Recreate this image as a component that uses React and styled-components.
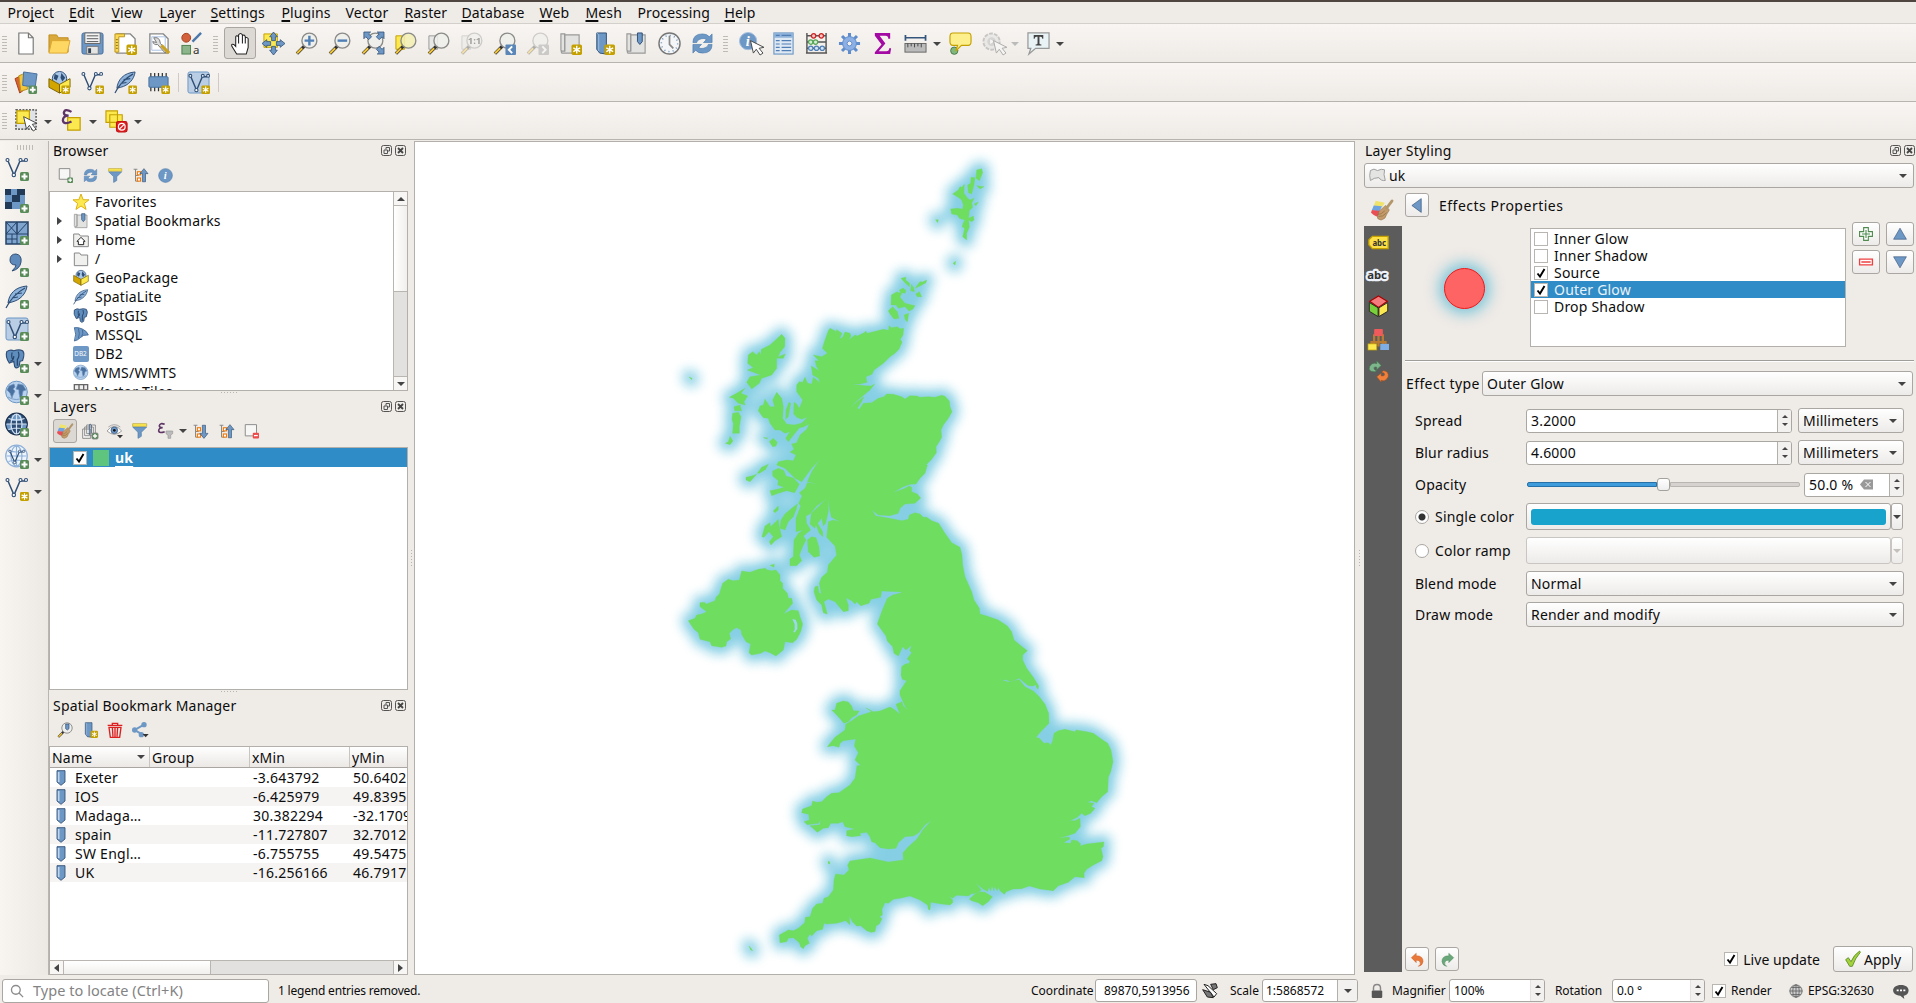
import React from "react";
import styled, { createGlobalStyle, css } from "styled-components";

const Global = createGlobalStyle`
  * { box-sizing: border-box; }
  html, body { margin: 0; padding: 0; }
  body {
    width: 1916px; height: 1003px; overflow: hidden; background: #efebe7; color: #0c0c0c;
    font-family: "Noto Sans", "Open Sans", sans-serif; font-size: 14px; line-height: 19px; letter-spacing: .2px;
  }
`;

/* ---------- icons ---------- */

const B = "#6d97c4";
const D = "#2f4e75";

const Star = ({ x = 15, y = 15, s = 9 }) => (
  <g transform={`translate(${x} ${y}) scale(${s / 9})`}>
    <rect width="9" height="9" rx="1.4" fill="#c4a000" />
    <path d="M4.5 1.2v6.6M1.6 2.9l5.8 3.2M7.4 2.9L1.6 6.1" stroke="#fff" strokeWidth="1.2" />
  </g>
);
const Plus = ({ x = 15, y = 15, s = 9 }) => (
  <g transform={`translate(${x} ${y}) scale(${s / 9})`}>
    <rect width="9" height="9" rx="1.6" fill="#5a8c5a" />
    <path d="M4.5 1.5v6M1.5 4.5h6" stroke="#fff" strokeWidth="2" />
  </g>
);
const Lens = ({ children, sheet }) => (
  <g>
    {sheet && <path d="M2 4h9v14H2z" fill={sheet} stroke={sheet === "#fce94f" ? "#c4a000" : "#999"} />}
    <path d="M10 14.5L2 22.5" stroke="#333" strokeWidth="3.4" />
    <path d="M7.5 17L2.2 22.2" stroke="#f4c534" strokeWidth="2" />
    <circle cx="15" cy="9" r="7.8" fill={sheet === "#fce94f" ? "#f3efb4" : "#eeeeec"} fillOpacity=".88" stroke="#8a8a88" strokeWidth="1.4" />
    {children}
  </g>
);
const VLine = ({ c = D }) => (
  <g fill="#fff" stroke={c} strokeWidth="1.1">
    <path d="M3 4l6 14L15 4h5" fill="none" strokeWidth="1.5" />
    <circle cx="2.500" cy="3" r="1.500" /><circle cx="8.800" cy="18" r="1.700" />
    <circle cx="15.500" cy="3" r="1.500" /><circle cx="21" cy="3" r="1.500" />
  </g>
);
const Feather = () => (
  <g>
    <path d="M22 1C10 2 4 9 3 18l4-1c8-2 14-8 15-16z" fill="#8fb4dc" stroke={D} />
    <path d="M1 23C5 15 11 8 20 3M7 13l6-1M10 9l7-1" stroke={D} fill="none" strokeWidth="1.200" />
  </g>
);
const Globe = ({ dark, c = D, f = "#a9c6e6" }) => (
  <g fill="none" stroke={dark ? "#d5e3f2" : c} strokeWidth="1.2">
    <circle cx="11.5" cy="11" r="10.8" fill={dark ? D : f} stroke={dark ? "#1d3350" : c} />
    {dark && <path d="M7 2h9l1 6H6zM1 11h5l1 6H3zM17 11h5l-2 6h-4z" fill={B} stroke="none" />}
    <path d="M11.5 1v20M1.5 11h20M3.5 5.5q8 3 16 0M3.5 16.5q8-3 16 0" />
    <ellipse cx="11.5" cy="11" rx="5.5" ry="10" />
  </g>
);
const Continents = () => (
  <g>
    <circle cx="11.5" cy="11" r="10.8" fill="#b9d2ee" stroke={B} />
    <path d="M4 5l5-2 1 3-2 2 2 2-2 4-1 3-2-5-3-3zM13 3l5 1 3 5-3 1-1 5-2 2-1-5v-3l-3-1z" fill="#4a719f" stroke="#6d93bf" strokeWidth=".7" />
    <path d="M3 16q8 5 17 0" fill="none" stroke="#7ca0c9" />
  </g>
);
const Elephant = () => (
  <g>
    <path d="M2 3q4-3 8-1 6-2 10 0 3 3 0 11l-3 1-1 6q-3 3-5 0l-1-6-5 2Q0 9 2 3z" fill="#5f8dbd" stroke={D} strokeWidth="1.300" />
    <path d="M8 4q-1 6 1 8M15 3q2 5-1 9v7M6 14q4-1 4-6" fill="none" stroke="#264166" strokeWidth="1.300" />
  </g>
);
const RefreshArrows = () => (
  <g fill={B} stroke="#3f72a8" strokeWidth=".6">
    <path d="M2 11Q2 2 12 2q5 0 7 3l3-3v9h-9l3-3q-2-2-5-1-5 1-5 4z" />
    <path d="M22 13q0 9-10 9-5 0-7-3l-3 3v-9h9l-3 3q2 2 5 1 5-1 5-4z" />
  </g>
);
const Tree = ({ up }) => (
  <g>
    <path d="M1 2h6M4 2v19h5M4 12h5" stroke="#888" strokeWidth="1.600" fill="none" />
    <rect x="7" y="6" width="5" height="5" fill="#fff" stroke="#f57900" strokeWidth="1.800" />
    <rect x="7" y="16" width="5" height="5" fill="#fff" stroke="#f57900" strokeWidth="1.800" />
    <path d={up ? "M15 22V9h-4l6.500-8 6.500 8h-4v13z" : "M15 2v13h-4l6.500 8 6.500-8h-4V2z"} fill={B} stroke={D} />
  </g>
);
const Cursor = ({ x = 0, y = 0, f = "#fff", s = "#444" }) => (
  <path transform={`translate(${x} ${y})`} d="M9 8l3 13 3-4 4 6 3-2-4-5 5-1z" fill={f} stroke={s} strokeWidth="1" />
);
const Book = () => (
  <g>
    <path d="M2 2h4v18H3l-1-1zM6 3h15v19H3l-1-2" fill="#e2e2e0" stroke="#999" strokeWidth="1.200" />
    <path d="M6 2v18" stroke="#999" />
  </g>
);
const Funnel = () => (
  <g><path d="M1 6l8 8v9l5-3v-6l8-8z" fill={B} stroke="#4d7bac" /><path d="M1 1h21v4H1z" fill="#fce94f" stroke="#b8a235" /></g>
);
const Sheet = ({ c = "#888" }) => <path d="M3 2h14l5 5v15H3z" fill="#fff" stroke={c} strokeWidth="1.400" />;

const ICONS = {
  page: <path d="M4 1h10l5 5v17H4zM14 1v5h5" fill="#fff" stroke="#777" strokeWidth="1.200" />,
  open: <g><path d="M1 3h8l2 3h10v15H1z" fill="#d9a93b" stroke="#c08d1d" /><path d="M4 9h19l-3 13H1z" fill="#ffd763" stroke="#dba82d" /></g>,
  save: <g><rect x="1" y="1" width="22" height="22" rx="2" fill={B} stroke="#456f9e" /><path d="M4 1h16v11H4z" fill="#f4f4f4" stroke="#666" /><path d="M6 4h12M6 7h12M6 10h12" stroke="#555" strokeWidth="1" /><path d="M6 15h12v8H6z" fill="#e4e4e2" stroke="#777" /><path d="M7.500 17h3v5h-3z" fill="#345" /></g>,
  layout: <g><Sheet /><path d="M1 2h10v3H5v16H1z" fill="#fcd94f" stroke="#b8931d" /><path d="M2 8h2M2 11h2M2 14h2M2 17h2" stroke="#8b6d00" /><Star x={13} y={13} s={11} /></g>,
  tools: <g><Sheet /><path d="M5 5h14v14H5z" fill="none" stroke="#a9c0e4" /><path d="M7 6q4-1 6 2l1 4 7 7-2 3-8-9q-4 1-5-3l4 1z" fill="#ddd" stroke="#777" /><path d="M15 14l8 8" stroke="#c8a227" strokeWidth="3.500" /></g>,
  style: <g><circle cx="6.500" cy="6" r="4.600" fill="#d2603a" stroke="#a3401f" /><path d="M22 1l-9 9" stroke="#4a78ab" strokeWidth="2.500" /><rect x="2" y="14" width="9" height="9" fill="#8cb58c" stroke="#4c7f4c" /><text x="13.500" y="23" fontSize="12" fill="#333">a</text></g>,
  hand: <path d="M8 23l-5-8q-1-3 2-2l2 2V5q1-2 3 0V3q2-3 4 0v1q2-2 3 1v1q2-1 3 1v9l-2 7zM10 5v7M14 4v8M17 6v6" fill="#fff" stroke="#222" strokeWidth="1.100" />,
  pan: <g><path d="M2 2h14v14H2z" fill="#fce94f" stroke="#c4a000" /><path d="M12 0l4 5h-2v4h-4V5H8zM12 24l4-5h-2v-4h-4v4H8zM0 12l5-4v2h4v4H5v2zM24 12l-5-4v2h-4v4h4v2z" fill={B} stroke={D} strokeWidth=".8" /></g>,
  zoomin: <Lens><path d="M15 4v10M10 9h10" stroke="#4f7fb5" strokeWidth="2.500" /></Lens>,
  zoomout: <Lens><path d="M10 9h10" stroke="#4f7fb5" strokeWidth="2.500" /></Lens>,
  zoomfull: <g><Lens /><path d="M3 0h7L8 2l3 3-3 3-3-3-2 2zM24 0v7l-2-2-3 3-3-3 3-3-2-2zM24 23v-7l-2 2-3-3-3 3 3 3-2 2z" fill={B} stroke={D} strokeWidth=".8" /></g>,
  zoomsel: <Lens sheet="#fce94f" />,
  zoomlayer: <Lens sheet="#e8e8e6" />,
  zoom11: <g opacity=".35"><Lens sheet="#e8e8e6"><text x="8" y="13" fontSize="10" fontWeight="700" letterSpacing="0">1:1</text></Lens></g>,
  zoomprev: <g><Lens /><rect x="13" y="13" width="11" height="11" rx="1" fill="#5b87b8" /><path d="M20 15l-3.500 3.500L20 22" stroke="#fff" strokeWidth="2" fill="none" /></g>,
  zoomnext: <g opacity=".35"><Lens /><rect x="13" y="13" width="11" height="11" rx="1" fill="#888" /><path d="M17 15l3.500 3.500L17 22" stroke="#fff" strokeWidth="2" fill="none" /></g>,
  newbook: <g><Book /><Star x={13} y={13} s={11} /></g>,
  newmark: <g><path d="M5 1h10v22l-7-1-3-4z" fill={B} stroke={D} /><path d="M5 1l2 2v17" fill="none" stroke="#9cbde2" /><Star x={13} y={13} s={11} /></g>,
  book: <g><Book /><path d="M13 1h5v9l-2.500 3L13 10z" fill={B} stroke={D} /></g>,
  clock: <g><circle cx="12" cy="12" r="11" fill="#f4f6f8" stroke="#777" strokeWidth="1.500" /><circle cx="12" cy="12" r="8.500" fill="none" stroke="#5f86b0" strokeWidth="1.500" strokeDasharray="1 3.450" /><path d="M12 4v9l4 4" stroke="#888" strokeWidth="1.800" fill="none" /></g>,
  refresh: <RefreshArrows />,
  identify: <g><circle cx="9.500" cy="9.500" r="9" fill={B} stroke="#a4bfe0" /><text x="7" y="15" fontSize="15" fontWeight="700" fontStyle="italic" fontFamily="Liberation Serif" fill="#fff">i</text><Cursor x={3} y={1} /></g>,
  table: <g><rect x="2" y="1" width="20" height="22" fill="#dfe9f4" stroke={B} strokeWidth="1.200" /><path d="M2 1h20v5H2z" fill="#8fb2da" /><path d="M4 3.500h4M10 3.500h10M4 9h4M10 9h10M4 12.500h4M10 12.500h10M4 16h4M10 16h10M4 19.500h4M10 19.500h10" stroke="#4f7fb5" strokeWidth="1.200" /></g>,
  abacus: <g><path d="M2 1v20M22 1v20M2 4h20M2 10.500h20M2 17h20M1 22h22" stroke="#555" strokeWidth="1.500" /><g strokeWidth="1.300"><g fill="#f7c5c5" stroke="#cc2222"><circle cx="9" cy="4" r="2.300" /><circle cx="17" cy="4" r="2.300" /></g><g fill="#d5efd5" stroke="#58a558"><circle cx="6" cy="10.500" r="2.300" /><circle cx="11" cy="10.500" r="2.300" /></g><g fill="#d5e5f5" stroke="#4f7fb5"><circle cx="6" cy="17" r="2.300" /><circle cx="12" cy="17" r="2.300" /><circle cx="18" cy="17" r="2.300" /></g></g></g>,
  gear: <g><g stroke="#5f8dcc" strokeWidth="3.200"><path d="M12 1v22M1 12h22M4.200 4.200l15.600 15.600M19.800 4.200L4.200 19.800" /></g><circle cx="12" cy="12" r="7.200" fill="#8cb0e4" stroke="#5f8dcc" /><circle cx="12" cy="12" r="2.500" fill="#f4f1ee" stroke="#5f8dcc" /></g>,
  sigma: <path d="M4 1h16v6h-2q0-3-3-3H9l6 8-7 8h8q3 0 3-3h2l-1 6H4v-2l7-8-7-9z" fill="#a30aa3" />,
  ruler: <g><path d="M1 6h22M1.500 3v6M22.500 3v6" stroke="#34557c" strokeWidth="1.800" /><rect x="1" y="12" width="22" height="9" fill="#bbb" stroke="#666" /><path d="M4 12v4M7.500 12v3M11 12v4M14.500 12v3M18 12v4" stroke="#444" /></g>,
  tip: <g><circle cx="5.500" cy="19.500" r="3.800" fill="#7fb87f" stroke="#4a7a4a" /><path d="M4 1h16q3 0 3 4v5q0 4-3 4h-7l-6 6 2-6H4q-3 0-3-4V5q0-4 3-4z" fill="#fdf08c" stroke="#c4a000" strokeWidth="1.200" /></g>,
  action: <g opacity=".4"><circle cx="10" cy="10" r="8.500" fill="#ddd" stroke="#888" strokeWidth="2" strokeDasharray="4 1.300" /><circle cx="10" cy="10" r="4.500" fill="#aaa" /><path d="M8.500 7.500l4 2.500-4 2.500z" fill="#fff" /><Cursor x={3} y={1} /></g>,
  textnote: <g><path d="M1 1h22v16H9l-7 6 2-6H1z" fill="#e9f2f5" stroke="#999" strokeWidth="1.300" /><path d="M7 3h10v4h-1q0-2-2-2h-1v7q0 1 2 1v1H9v-1q2 0 2-1V5h-1Q8 5 8 7H7z" fill="#444" /></g>,
  datasource: <g><path d="M0 8l6-3 3 15-4 3z" fill="#d9602f" stroke="#a3401f" /><path d="M4 5l7-3 2 17-7 2z" fill="#f3c73c" stroke="#b8931d" /><path d="M9 1l14 2-2 14-13-2z" fill={B} stroke="#456f9e" /><Plus x={14} y={15} /></g>,
  geopackage: <g><circle cx="12" cy="8" r="7.500" fill="#a9c6e6" stroke={D} /><path d="M7 3l4 2-2 5-3-2zM14 2l4 5-3 4-2-4z" fill={D} /><path d="M1 8l11 6v9L1 17z" fill="#d3a500" stroke="#7a6100" /><path d="M12 14l11-6v9l-11 6z" fill="#fce94f" stroke="#7a6100" /></g>,
  geopackagenew: <g><circle cx="12" cy="8" r="7.500" fill="#a9c6e6" stroke={D} /><path d="M7 3l4 2-2 5-3-2zM14 2l4 5-3 4-2-4z" fill={D} /><path d="M1 8l11 6v9L1 17z" fill="#d3a500" stroke="#7a6100" /><path d="M12 14l11-6v9l-11 6z" fill="#fce94f" stroke="#7a6100" /><Star x={14} y={15} /></g>,
  vnew: <g><VLine /><Star /></g>,
  vadd: <g><VLine /><Plus /></g>,
  feather: <Feather />,
  feathernew: <g><Feather /><Star /></g>,
  featheradd: <g><Feather /><Plus /></g>,
  chip: <g><path d="M4 2v19M8 2v19M12 2v19M16 2v19M20 2v19" stroke="#333" strokeWidth="1.300" /><rect x="2" y="6" width="20" height="11" rx="1" fill={B} stroke="#456f9e" /><Star /></g>,
  virtnew: <g><rect x="1" y="1" width="22" height="22" rx="2" fill="#b9cde4" stroke={B} /><g transform="translate(1 2)"><VLine /></g><Star /></g>,
  virtadd: <g><rect x="1" y="1" width="22" height="22" rx="2" fill="#b9cde4" stroke={B} /><g transform="translate(1 2)"><VLine /></g><Plus /></g>,
  select: <g><path d="M1 1h21v20H1z" fill="#dfe2e6" stroke="#333" strokeWidth="1.300" strokeDasharray="2 1.400" /><path d="M2 2h13v13H2z" fill="#fce94f" stroke="#c4a000" strokeWidth="1.300" /><Cursor /></g>,
  selexp: <g><path d="M8 9h13v13H8z" fill="#fce94f" stroke="#c4a000" strokeWidth="1.300" /><path d="M12 3Q5-1 4 4q0 3 5 3-6 0-6 5 1 5 9 1" fill="none" stroke="#5e3566" strokeWidth="2.400" /></g>,
  deselect: <g fill="#fce94f" stroke="#c4a000" strokeWidth="1.200"><path d="M1 2h12v12H1zM5 6h13v13H5z" /><rect x="12" y="13" width="11" height="11" rx="2" fill="#e02020" stroke="#c01010" /><circle cx="17.500" cy="18.500" r="3.500" fill="none" stroke="#fff" /><path d="M15 21l5-5" stroke="#fff" /></g>,
  raster: <g><rect width="20" height="20" fill={B} /><path d="M0 0h6v6H0zM12 0h8v6h-5v7h-8V6h5zM0 13h7v7H0z" fill="#213a58" /><Plus /></g>,
  mesh: <g><path d="M1 1h22v22H1z" fill="#7fa5cf" stroke="#264166" strokeWidth="1.500" /><path d="M1 13h22M12 1v22M1 1l11 12L12 1 1 13M12 13L23 1M7 13v10M1 18h11" fill="none" stroke="#264166" /><Plus /></g>,
  comma: <g><path d="M5 7q0-6 6-6 6 1 5 8-1 7-9 9 4-4 4-6-6 0-6-5z" fill="#5d8abb" stroke={D} /><Plus /></g>,
  pgadd: <g><g transform="scale(.88)"><Elephant /></g><Plus /></g>,
  wmsadd: <g><Continents /><Plus /></g>,
  wcsadd: <g><Globe dark /><Plus /></g>,
  wfsadd: <g><Globe c="#8db0d8" f="#eef4fb" /><g transform="translate(3 4) scale(.75)"><VLine /></g><Plus /></g>,
  addsel: <g><path d="M2 1h17v17H2z" fill="#f7f7f5" stroke="#888" strokeWidth="1.500" /><Plus /></g>,
  remsel: <g><path d="M2 1h18v18H2z" fill="#f7f7f5" stroke="#888" strokeWidth="1.500" /><rect x="14" y="14" width="10" height="9" rx="1.500" fill="#ef4b4b" /><path d="M16 18.500h6" stroke="#fff" strokeWidth="2" /></g>,
  filter: <Funnel />,
  treeup: <Tree up />,
  treedown: <Tree />,
  info: <g><circle cx="12" cy="12" r="11" fill={B} stroke="#4d7bac" /><text x="9" y="18" fontSize="17" fontWeight="700" fontStyle="italic" fontFamily="Liberation Serif" fill="#fff">i</text></g>,
  star: <path d="M12 0l3.200 8.500 8.800.2-7 5.500 2.600 9L12 18l-7.600 5.200 2.600-9-7-5.500 8.800-.2z" fill="#fce94f" stroke="#d8a800" strokeWidth="1.300" />,
  home: <g><path d="M1 3h8l2 3h12v16H1z" fill="#f0f0ee" stroke="#888" strokeWidth="1.500" /><path d="M6 14l6-6 6 6h-2v5H8v-5z" fill="#fff" stroke="#222" strokeWidth="1.500" /></g>,
  folder: <path d="M2 3h8l2 3h10v16H2z" fill="#f0f0ee" stroke="#888" strokeWidth="1.500" />,
  elephant: <Elephant />,
  mssql: <path d="M2 1q6-1 12 2 7 3 9 9-8-1-12 4-4 4-9 5 4-10 0-20zM8 2q3 9 0 15M14 4q2 6-1 10" fill="#6d97c4" stroke="#3f6797" strokeWidth="1.300" />,
  db2: <g><rect width="24" height="24" rx="3" fill={B} /><text x="2" y="15" fontSize="9.500" letterSpacing="0" fill="#fff">DB2</text></g>,
  wms: <Continents />,
  vtiles: <g><path d="M2 1h20v22H2z" fill="#eee" stroke="#666" strokeWidth="2" /><path d="M9 1v22M16 1v22M2 9h20" stroke="#666" strokeWidth="2" /></g>,
  brush: (
    <g>
      <path d="M5 2l10 2-3 5-9-1z" fill="#f0e36a" /><path d="M3 7l9 1-3 6-8-2z" fill="#6ea3e0" /><path d="M1 12l9 1 2 7q-7 0-12-5z" fill="#ea4e55" />
      <path d="M9 13l7-6 4 5-3 5q-1 5-6 6-5-1-4-4z" fill="#c39a6b" stroke="#8f6f45" strokeWidth=".6" />
      <path d="M8 19q5 1 9-4M7 17q4 0 8-4" fill="none" stroke="#94713f" strokeWidth=".8" />
      <path d="M17 10l6-8" stroke="#b3976b" strokeWidth="3" strokeLinecap="round" />
    </g>
  ),
  addgroup: <g fill="#f4f4f2" stroke="#888" strokeWidth="1.400"><path d="M1 9h12v14H1zM4 6h13v13H4zM7 3h13v13H7z" /><path d="M11 18V3q1-3 3 0v12" fill="none" stroke="#4a6484" /><Plus /></g>,
  eye: <g><path d="M0 12q11-14 22 0-11 10-22 0z" fill="#fff" stroke="#999" strokeWidth="1.400" /><circle cx="11" cy="11" r="5" fill={B} stroke={D} /><circle cx="11" cy="11" r="2" fill="#111" /><path d="M2 6q9-7 18 0" fill="none" stroke="#aaa" strokeWidth="1.500" /><path d="M15 18h9l-4.500 5z" fill="#333" /></g>,
  eps: <g><path d="M10 2Q3-1 2 4q0 3 5 3-6 0-6 5 1 4 9 1" fill="none" stroke="#5e3566" strokeWidth="2.400" /><path d="M12 12h10v4l-3 2v5h-4v-5l-3-2z" fill="#bbb" stroke="#999" /></g>,
  marklens: <g><Lens><path d="M13 3h5v7l-2.500 2L13 10z" fill={B} stroke={D} /></Lens></g>,
  trash: <g fill="none" stroke="#dd1f1f" strokeWidth="2"><path d="M3 8l2 15h14l2-15zM8 8l1 14M12 8v14M16 8l-1 14M1 5h22M8 5V2h8v3" /></g>,
  share: <g><path d="M18 4L4 12l12 7" fill="none" stroke={B} strokeWidth="3" /><circle cx="18" cy="4" r="4" fill={B} /><circle cx="4" cy="12" r="4" fill={B} /><circle cx="14" cy="19" r="4" fill={B} /><path d="M16 18h9l-4.500 5z" fill="#333" /></g>,
  mark: <g><path d="M6 1h12v17l-6 5-6-5z" fill={B} stroke={D} strokeWidth="1.300" /><path d="M8.500 3v15" stroke="#c0d6ee" strokeWidth="2.500" /></g>,
  poly: <path d="M2 5q5-4 10 0 6-3 10-1-2 6 1 15-6 1-9-4-7 0-12 4Q0 12 2 5z" fill="#e4e4e2" stroke="#999" strokeWidth="1.300" />,
  left: <path d="M18 1v22L3 12z" fill={B} stroke={D} />,
  up: <path d="M12 2l11 19H1z" fill={B} stroke={D} />,
  down: <path d="M12 22L1 3h22z" fill={B} stroke={D} />,
  add: <path d="M8 1h8v7h7v8h-7v7H8v-7H1V8h7zM12 5v14M5 12h14" fill="#fff" stroke="#4f8a4f" strokeWidth="1.900" />,
  remove: <path d="M1 7h22v10H1zM4 12h16" fill="#fff" stroke="#ef4040" strokeWidth="2.300" />,
  undo: <path d="M2 9l8-7v4q11 0 11 9-1 7-8 8 5-3 3-7-1-3-6-3v4z" fill="#e8793a" stroke="#c4571b" strokeWidth=".6" />,
  redo: <path d="M22 9l-8-7v4Q3 6 3 15q1 7 8 8-5-3-3-7 1-3 6-3v4z" fill="#6aa77a" stroke="#468556" strokeWidth=".6" />,
  check: <path d="M1 13l4-3 4 6Q13 6 22 0l1 2Q15 11 11 23H7z" fill="#a5d23c" stroke="#4c8415" strokeWidth="1.200" />,
  tag: <g><path d="M5 5h18v14H5l-4-4.500V9z" fill="#fce046" stroke="#c4a000" strokeWidth="1.500" /><text x="5" y="15.500" fontSize="9" fontWeight="700" letterSpacing="0" fill="#333">abc</text></g>,
  halo: <text x="-1" y="17" fontSize="13" fontWeight="700" letterSpacing="0" fill="#333" stroke="#eef2fb" strokeWidth="5" strokeLinejoin="round" paintOrder="stroke">abc</text>,
  cube: <g stroke="#222" strokeWidth="1"><path d="M12 0l10 6-10 7L2 6z" fill="#f47c7c" stroke="#a00" strokeWidth="1.300" /><path d="M1.500 7.500l10 6v10l-10-6z" fill="#7ad03a" /><path d="M22.500 7.500l-10 6v10l10-6z" fill="#fce94f" /></g>,
  diagram: <g><path d="M7 6v11M12 8v12M17 6v11M4 18v-3h16v3" stroke="#b97a32" strokeWidth="2.600" fill="none" /><rect x="7" y="0" width="10" height="8" rx="1" fill="#ef5a5a" /><rect x="0" y="17" width="10" height="7" fill="#fce94f" stroke="#c4a000" strokeWidth=".8" /><rect x="14" y="17" width="10" height="7" fill="#7fade6" /></g>,
  history: (
    <g strokeWidth=".6">
      <path d="M6 12Q0 12 2 6q3-5 8-3V0l5 5-5 5V7Q6 6 7 9q1 2 3 2-2 2-4 1z" fill="#7fb58c" stroke="#3c7a4a" />
      <path d="M18 11q6 1 5 7-3 6-8 4v2l-5-6 5-4v3q4 1 4-2 0-2-3-2 0-2 2-2z" fill="#f0803c" stroke="#b3521a" />
    </g>
  ),
  search: <g fill="none" stroke="#8c8c8c" strokeWidth="2.300"><circle cx="10" cy="10" r="7.500" /><path d="M15.500 15.500l7 7" /></g>,
  extents: <g fill="#fff" stroke="#222" strokeWidth="1.500"><path d="M3 2l15 19 4-5L9 4z" /><path d="M1 10l7 11 9 1-4-8zM13 2l8-1 2 6-6 3z" fill="#777" /></g>,
  lock: <g><path d="M6 11V7q0-6 6-6t6 6v4" fill="none" stroke="#888" strokeWidth="2.500" /><rect x="3" y="11" width="18" height="13" rx="2" fill="#555" /></g>,
  crs: <g fill="none" stroke="#666" strokeWidth="1.500"><circle cx="12" cy="12" r="10.500" fill="#ccc" /><path d="M12 1v22M1 12h22M4 6h16M4 18h16" /><ellipse cx="12" cy="12" rx="5.500" ry="10.500" /></g>,
  bubble: <g><path d="M12 3c15 0 14 15 4 16l1 5-6-5C-4 18-3 3 12 3z" fill="#555" /><path d="M5.500 11h3M10.500 11h3M15.500 11h3" stroke="#fff" strokeWidth="2.600" /></g>,
};

const Svg = styled.svg`
  display: block; flex: none; overflow: visible;
  width: ${(p) => p.$s}px; height: ${(p) => p.$s}px;
`;
const Icon = ({ n, s = 22 }) => <Svg $s={s} viewBox="0 0 24 24">{ICONS[n]}</Svg>;

const Caret = styled.i`
  display: block; flex: none; width: 0; height: 0; margin: 0 auto;
  border: ${(p) => p.$s || 4}px solid transparent;
  ${(p) => (p.$up ? "border-top-width: 0; border-bottom-color:" : "border-bottom-width: 0; border-top-color:")}
  ${(p) => p.$c || "#444"};
`;
const CaretSide = styled.i`
  width: 0; height: 0; border: 4.500px solid transparent;
  ${(p) => (p.$left ? "border-left-width: 0; border-right: 5px solid #444;" : "border-right-width: 0; border-left: 5px solid #444;")}
`;

/* ---------- window ---------- */

const Window = styled.div`
  width: 1916px; height: 1003px; display: flex; flex-direction: column;
  border-top: 2px solid #4f463f; overflow: hidden; background: #efebe7;
`;
const MenuBar = styled.nav`
  height: 22px; flex: none; display: flex; padding-left: 7.500px; border-bottom: 1px solid #d3cfcb;
`;
const MenuItem = styled.span`
  width: ${(p) => p.$w}px; line-height: 22px; white-space: nowrap; letter-spacing: .12px;
  u { text-underline-offset: 2px; text-decoration-thickness: 1.500px; text-decoration-skip-ink: none; }
`;
const ToolBar = styled.div`
  height: ${(p) => p.$h || 39}px; flex: none; display: flex; align-items: center; padding-left: 2px;
  border-bottom: 1px solid #b7b3af; background: linear-gradient(#f8f5f2, #eeebe7);
`;
const Grip = styled.i`
  flex: none; width: 5px; height: 17px; margin: 0 6px 0 ${(p) => p.$ml || 5}px;
  background: radial-gradient(circle, #b9b4ae 0.800px, transparent 1px) 0 0 / 2.500px 3px;
  ${(p) => p.$start && css`margin: 0 3px 0 0;`}
`;
const ToolButton = styled.span`
  flex: none; width: 33px; height: 32px; display: flex; align-items: center; justify-content: center;
  ${(p) => p.$on && css`
    width: 32px; margin-right: 1px; border: 1px solid #aaa5a0; border-radius: 3px; background: #dcd8d4;
  `}
`;
const DropSlot = styled.span` flex: none; width: 12px; margin-top: 2px; padding-right: 2px; `;
const Separator = styled.i` width: 1px; height: 19px; margin: 0 3px; background: #cfcac6; `;

const Body = styled.div` flex: 1; min-height: 0; display: flex; padding-top: 1px; `;
const SideBar = styled.aside`
  width: 48px; flex: none; padding-top: 4px; background: linear-gradient(90deg, #f8f5f1, #ece8e4);
`;
const SideGrip = styled.i`
  display: block; width: 17px; height: 5px; margin: 0 0 3px 16px;
  background: radial-gradient(circle, #b9b4ae 0.800px, transparent 1px) 0 0 / 3px 2.500px;
`;
const SideItem = styled.div` height: 32px; display: flex; align-items: center; padding-left: 5px; `;
const SideCaret = styled.span` margin: 6px 0 0 5px; `;

const Docks = styled.section`
  width: 361px; flex: none; display: flex; flex-direction: column; padding-right: 1px; border-left: 1px solid #b9b5b1;
`;
const DockTitle = styled.header`
  height: 20px; flex: none; display: flex; align-items: center; gap: 3px;
  padding: 0 ${(p) => (p.$right ? 0 : 2)}px 2px ${(p) => (p.$right ? 1 : 4)}px;
  ${(p) => p.$right && "margin-right: -1px;"}
  span { flex: 1; }
`;
const DockTools = styled.div` height: 30px; flex: none; display: flex; align-items: center; padding: 0 0 2px 3.500px; `;
const DockButton = styled.span`
  width: ${(p) => p.$w || 25}px; height: 24px; display: flex; align-items: center; justify-content: center;
  ${(p) => p.$on && css`width: 24px; margin-right: 1px; border: 1px solid #aaa5a0; border-radius: 3px; background: #dcd8d4;`}
`;
const View = styled.div`
  height: ${(p) => p.$h}px; flex: none; display: flex; flex-direction: ${(p) => (p.$row ? "row" : "column")};
  border: 1px solid #b3afab; background: #fff; overflow: hidden;
`;
const HSplit = styled.div`
  height: 6px; flex: none; display: flex; justify-content: center; align-items: flex-start;
  &::after { content: ""; width: 18px; height: 3px; background: radial-gradient(circle, #b9b4ae 0.800px, transparent 1px) 0 0 / 3px 3px; }
`;
const VSplit = styled.div`
  width: ${(p) => p.$w}px; flex: none; display: flex; justify-content: center; align-items: center;
  &::after { content: ""; width: 3px; height: 18px; background: radial-gradient(circle, #b9b4ae 0.800px, transparent 1px) 0 0 / 3px 3px; }
`;
const TreeList = styled.div` flex: 1; overflow: hidden; `;
const TreeRow = styled.div` height: 19px; display: flex; align-items: center; `;
const TreeArrow = styled.span` width: 23px; padding-left: 7px; display: flex; `;
const TreeText = styled.span` padding-left: 6px; `;
const Scroll = styled.div`
  width: 14px; display: flex; flex-direction: column; background: #e3e1df; border-left: 1px solid #b9b5b1;
`;
const ScrollButton = styled.span`
  height: 14px; flex: none; display: flex; align-items: center; background: #f7f6f5;
  ${(p) => (p.$end ? "border-top: 1px solid #b9b5b1; margin-top: auto;" : "border-bottom: 1px solid #b9b5b1;")}
`;
const ScrollThumb = styled.span` height: 86px; background: linear-gradient(90deg, #fff, #f1efed); border-bottom: 1px solid #b9b5b1; `;
const HScroll = styled.div`
  height: 14px; margin-top: auto; display: flex; background: #e3e1df; border-top: 1px solid #b9b5b1;
`;
const HScrollButton = styled.span`
  width: 14px; display: flex; align-items: center; justify-content: center; background: #f7f6f5;
  ${(p) => (p.$end ? "border-left: 1px solid #b9b5b1; margin-left: auto;" : "border-right: 1px solid #b9b5b1;")}
`;
const HScrollThumb = styled.span` width: 147px; background: linear-gradient(#fff, #f1efed); border-right: 1px solid #b9b5b1; `;

const LayerRow = styled.div`
  height: 19px; display: flex; align-items: center; background: #308cc6; color: #fff; padding-left: 23px;
  b { margin-left: 6px; text-decoration: underline; text-underline-offset: 3px; text-decoration-thickness: 1px; }
`;
const Swatch = styled.i` width: 16px; height: 16px; margin-left: 6px; background: #5fc47e; `;
const CheckFrame = styled.span`
  flex: none; width: 14px; height: 14px; display: flex; align-items: center; justify-content: center;
  border: 1px solid #b9b5b1; background: #fff;
`;
const Check = ({ on }) => (
  <CheckFrame>
    {on && <Svg $s={10} viewBox="0 0 10 10"><path d="M1.500 5.500L4 8.500 8.500 1" fill="none" stroke="#000" strokeWidth="1.900" /></Svg>}
  </CheckFrame>
);

const TableHead = styled.div`
  height: 21px; flex: none; display: grid; grid-template-columns: 100px 100px 100px 1fr;
  background: linear-gradient(#fff, #ebe8e5); border-bottom: 1px solid #a9a5a1;
`;
const HeadCell = styled.span`
  display: flex; align-items: center; justify-content: space-between; padding: 0 4px 0 2px; border-right: 1px solid #c9c5c1; overflow: hidden;
  &:last-child { border-right: 0; }
  i { margin: 0; }
`;
const TableRow = styled.div`
  height: 19px; flex: none; display: grid; grid-template-columns: 200px 100px 1fr;
  background: ${(p) => (p.$odd ? "#f5f4f3" : "#fff")};
`;
const Cell = styled.span`
  display: flex; align-items: center; gap: 6px; padding-left: 3px; white-space: nowrap; overflow: hidden; letter-spacing: .25px;
`;

const FloatIcon = () => (
  <Svg $s={11} viewBox="0 0 11 11"><rect x=".5" y=".5" width="10" height="10" rx="2" fill="none" stroke="#555" /><path d="M3 5h3.500v3.500H3zM5 4.500V2.500h3.500V6H7" fill="none" stroke="#555" /></Svg>
);
const CloseIcon = () => (
  <Svg $s={11} viewBox="0 0 11 11"><rect x=".5" y=".5" width="10" height="10" rx="2" fill="none" stroke="#555" /><path d="M3 3l5 5M8 3L3 8" stroke="#444" strokeWidth="1.800" /></Svg>
);

/* ---------- map ---------- */

const Canvas = styled.main` width: 941px; flex: none; border: 1px solid #b3afab; background: #fff; svg { display: block; } `;

const shift = (dy, s) => s.trim().split(/\s+/).map((p) => {
  const [x, y] = p.split(",").map(Number);
  return `${x},${y + dy}`;
}).join(" ");

const NORTH = 0;
const MIDDLE = 900;
const SOUTH = 1620;

const MAINLAND = [
  shift(NORTH, `475,572 480,565 490,570 497,573 496,583 500,569 506,573 516,580 508,597 518,592 525,576 540,580 543,588
    536,600 555,585 562,588 585,577 587,573 592,580 640,568 656,571 657,557 665,563 682,560 690,566 701,565 699,585 691,598 696,607 687,628
    675,640 660,650 640,670 612,690 606,703 588,710 590,722 592,727 570,732 545,732 585,737 603,738 614,732 600,750 578,768 560,783
    540,803 565,782 582,770 574,787 562,805 568,808 580,790 605,788 625,775 642,770 650,762 670,763 695,770 705,777
    720,767 740,768 750,772 775,770 795,772 815,766 825,769 838,783 840,800 846,815 835,835 820,855 813,870 815,892
    808,905 798,920 799,938 785,958 768,975`),
  shift(MIDDLE, `772,75 765,100 750,115 738,132 720,133 700,140 668,158 700,147 718,138 725,142 725,155 742,162 752,174 735,190
    705,192 690,205 685,220 660,227 625,225 605,210 618,228 655,234 695,242 715,238 718,225 735,218 750,222 760,232 770,232
    785,242 806,250 825,280 845,308 870,322 876,345 878,375 885,410 905,455 912,480 928,505 930,522 950,528 985,540
    1012,558 1025,575 1032,600 1050,615 1072,632 1058,645 1058,660 1070,685 1090,712 1106,738 1104,748 1099,742 1098,734
    1090,738 1075,737 1060,725 1048,715 1030,722 1018,724 1008,719 995,720 1015,726 1048,719 1065,740 1090,753 1108,770
    1125,793 1136,820 1137,850`),
  shift(SOUTH, `1115,152 1098,172 1108,175 1122,190 1135,188 1142,195 1148,182 1152,160 1165,152 1185,148 1215,155 1218,150 1250,155
    1270,160 1295,178 1313,190 1323,210 1329,245 1322,275 1315,292 1313,335 1295,350 1280,368 1265,362 1250,367 1272,370 1264,380
    1275,385 1262,400 1245,407 1235,400 1222,412 1200,422 1215,422 1230,415 1231,440 1215,460 1190,468 1165,474 1197,471
    1200,477 1180,488 1202,490 1205,480 1222,482 1232,492 1230,498 1250,492 1302,486 1300,500 1293,505 1299,530 1295,542 1270,555
    1250,568 1242,580 1243,593 1215,590 1195,607 1165,617 1150,632 1110,627 1078,618 1055,626 1030,627 1008,635 1003,643 990,632
    984,622 982,632 974,620 972,633 966,618 962,633 957,622 953,634 940,628 918,610 934,630 920,640 905,641 895,648 860,646 847,655 835,647 848,660 848,668 840,675
    815,672 782,667 780,690 775,688 773,675 750,660 720,648 690,655 670,658 655,670 645,668 636,688 637,705 628,710
    636,716 628,732 618,738 615,755 603,757 590,752 572,737 560,738 547,725 538,708 540,734 527,722 500,730 470,732 462,730
    458,748 440,752 425,768 420,762 412,775 418,790 405,797 400,806 392,800 388,788 370,773 355,775 350,785 330,788
    328,765 355,750 370,752 385,745 404,728 406,712 420,710 428,685 440,672 458,670 462,655 475,650 490,630 492,600 497,582
    522,585 537,570 533,555 540,543 600,534 655,546 700,540 699,518 715,500 740,478 760,448 785,421 765,435 745,460
    730,468 705,470 685,488 678,505 655,507 630,503 615,488 605,485 600,470 590,457 570,460 572,467 545,470 530,467 530,452 555,447
    525,440 518,425 505,430 482,430 475,443 460,445 442,457 420,437 450,434 452,418 447,430 412,434 402,425 418,420
    416,403 395,398 398,387 425,377 428,363 440,367 455,365 470,350 485,340 507,338 540,315 555,295 561,257 572,256 555,240
    565,218 553,198 557,177 520,182 510,190 507,202 490,197 472,200 495,172 525,150 527,133 545,122 565,108 605,95 588,84 610,95
    630,93 660,81 675,90 690,103 678,73 696,65 700,78 716,92 735,88 730,94 718,95 706,80 690,45 690,32`),
  shift(MIDDLE, `710,722 697,718 693,705 695,680 706,672 718,670 720,663 711,657 725,638 719,632 725,616 708,630 698,620 685,648 672,640
    668,620 652,603 648,588 622,552 635,515 652,475 668,465 692,459 696,456 635,453 632,472 603,478 597,490 572,497
    560,485 555,492 545,482 528,473 535,495 535,512 520,515 495,485 475,477 462,485 466,500 472,522 460,518 455,495 440,480
    432,455 435,440 444,438 447,458 454,462 448,430 455,412 472,397 475,375 500,345 495,318 470,292 475,245 490,240 510,245 484,232 478,205 474,180
    475,215 467,250 460,258 455,235 443,250 458,275 459,290 448,280 438,255 434,265 420,252 424,220 445,200 468,178 440,198
    420,222 408,228 410,250 422,270 400,288 408,300 398,320 388,345 395,362 380,377 360,377 360,357 370,350 372,300 385,280 400,270
    378,275 378,235 392,198 386,190 396,168 388,158 405,145 412,128 442,131 412,125 425,95 448,60 425,85 395,125 375,115 345,85
    320,75 325,65 350,60 370,62 378,45 360,36 372,28 365,12 380,8`),
  shift(NORTH, `390,885 410,868 418,852 398,862 385,862 415,848 395,850 412,832 395,838 380,832 371,822 372,787 380,792 388,805 398,780
    380,755 380,735 388,725 398,727 405,712 413,730 425,732 430,712 450,728 445,715 428,705 424,678 447,692 440,680 435,662
    447,662 430,645 455,650 472,640 457,625 465,600`),
].join(" ");

const ISLANDS = [
  [MIDDLE, "308,93 325,85 342,92 348,108 370,114 388,133 374,158 350,152 325,160 305,167 300,152 322,148 342,142 323,135 325,122 308,108"],
  [MIDDLE, "228,112 245,108 260,103 240,125 228,120"], [MIDDLE, "262,100 275,82 295,73 287,88 268,100"],
  [MIDDLE, "382,192 365,205 345,222 333,240 330,265 345,270 355,245 370,230 380,205"],
  [MIDDLE, "276,290 285,258 300,248 302,260 325,238 328,260 335,290 315,302 303,315 298,305 310,290 297,275 282,292"],
  [MIDDLE, "310,213 325,198 325,210 315,218"], [MIDDLE, "412,300 425,290 438,293 447,320 449,348 432,352 415,335"],
  [MIDDLE, "300,376 313,373 312,382"],
  [MIDDLE, `215,393 240,397 265,388 285,385 293,390 305,392 318,390 330,405 330,422 338,430 338,445 352,460 355,475 365,475 368,490 355,505 340,522
    365,510 385,512 390,530 398,552 392,575 380,598 368,608 345,605 340,630 318,648 300,638 285,633 272,640 245,645 237,638 242,612
    228,605 215,583 213,570 200,563 190,568 178,580 182,597 170,605 168,618 155,622 125,617 120,605 90,598 85,578 72,568 55,542
    75,535 80,525 95,522 110,515 90,500 90,488 102,487 110,492 135,482 138,472 148,462 158,430 175,418 190,422 208,420`],
  [SOUTH, "485,90 495,90 500,70 520,63 535,66 545,78 550,92 568,93 560,105 545,113 535,125 522,130 505,110 492,97"],
  [SOUTH, "898,657 915,642 930,635 945,637 967,650 955,665 938,677 925,668 905,662"],
  [SOUTH, "474,544 479,545 480,552 475,551"], [SOUTH, "237,798 242,803 248,812 242,810"],
  [NORTH, `335,583 345,595 344,620 330,637 325,650 346,642 340,655 320,655 320,685 305,705 290,710 275,715 268,730 245,747 230,727 240,710
    255,708 272,705 232,690 250,683 233,670 235,645 248,635 260,645 268,635 272,645 274,628 300,615 320,597`],
  [NORTH, "178,772 200,760 225,745 213,760 233,768 222,785 226,795 205,790 190,775"], [NORTH, "192,800 210,795 215,812 194,812"],
  [NORTH, "188,820 205,817 213,830 208,860 208,880 188,880 190,850 186,838"], [NORTH, "166,910 175,905 180,889 189,903 180,914"],
  [NORTH, `320,757 335,775 340,800 338,835 350,852 372,855 400,848 412,852 390,862 375,880 355,905 347,895 360,875 345,880 330,870 315,870 300,850
    295,835 280,833 265,812 270,798 280,795 285,778 300,800 314,800 308,780`],
  [NORTH, "357,787 362,790 355,830 347,838 348,810"], [NORTH, "298,905 310,895 322,907 318,918 308,920"],
  [NORTH, "280,893 292,893 292,897"], [NORTH, "57,711 66,715 65,719"],
  [NORTH, "664,465 680,456 695,460 690,472 705,490 735,497 728,508 717,513 705,500 685,505 678,495 663,495"],
  [NORTH, "655,512 668,500 682,515 687,535 672,537 660,522"], [NORTH, "702,525 716,520 712,545 706,540"],
  [NORTH, "693,415 708,412 707,420 719,430 718,440 705,428"], [NORTH, "688,450 700,444 708,452 705,460 692,458"],
  [NORTH, "735,445 750,425 758,426 770,420 768,428 750,438"], [NORTH, "724,433 730,442 734,455 722,452"],
  [NORTH, "737,462 748,455 755,470 742,470"], [NORTH, "849,370 857,364 855,375"], [NORTH, "797,239 805,239 803,248"],
  [NORTH, `848,162 865,150 870,140 876,142 883,133 882,160 893,175 900,180 912,175 905,190 908,202 898,212 896,235 910,228 912,240 905,245 896,240
    898,262 890,280 890,300 878,290 884,265 876,260 880,248 885,240 868,235 862,225 845,222 842,207 860,205 878,207 880,195 875,180 862,170`],
  [NORTH, "893,135 902,130 903,112 915,113 912,135 905,162 895,158"], [NORTH, "920,90 935,86 938,98 928,122 918,115"],
  [NORTH, "920,137 942,140 930,147"], [NORTH, "912,192 925,186 918,197"],
];

const UkShape = () => (
  <g strokeLinejoin="round">
    <polygon points={MAINLAND} />
    {ISLANDS.map(([dy, pts], i) => <polygon key={i} points={shift(dy, pts)} />)}
  </g>
);

const MapDrawing = () => (
  <svg width="939" height="832" viewBox="415 142 939 832">
    <defs>
      <filter id="glow" x="-10%" y="-10%" width="120%" height="120%"><feGaussianBlur stdDeviation="17" /></filter>
    </defs>
    <g transform="translate(670 140) scale(.33333)">
      <g filter="url(#glow)" opacity=".52" fill="#17a3cc" stroke="#17a3cc" strokeWidth="42"><UkShape /></g>
      <g fill="#6fdd5f" stroke="#6fdd5f" strokeWidth="1"><UkShape /></g>
      <path d="M367 1437l10 2 5 12v16l-7 10h-6l5-8v-16z" fill="#9bd8ea" />
    </g>
  </svg>
);

/* ---------- layer styling panel ---------- */

const Panel = styled.section` width: 550px; flex: none; display: flex; flex-direction: column; `;
const box = css` border: 1px solid #aaa6a2; border-radius: 3px; `;
const Combo = styled.div`
  ${box} height: 25px; width: ${(p) => (p.$w ? p.$w + "px" : "auto")}; flex: ${(p) => (p.$grow ? 1 : "none")};
  display: flex; align-items: center; padding: 0 6px 0 4px; background: linear-gradient(#fff, #edebe9);
  margin-top: ${(p) => p.$mt || 0}px;
  ${Caret} { margin: 0 0 0 auto; }
`;
const PanelBody = styled.div` flex: 1; display: flex; padding-top: 2px; `;
const Strip = styled.div` width: 38px; flex: none; display: flex; flex-direction: column; `;
const StripTop = styled.div` height: 36px; padding: 9px 0 0 7px; `;
const StripDark = styled.div` height: 746px; background: #5c5c5c; display: flex; flex-direction: column; padding: 0 0 0 4px; `;
const StripItem = styled.span` height: 32.300px; display: flex; align-items: center; `;
const Props = styled.div` flex: 1; display: flex; flex-direction: column; padding-left: 3px; min-width: 0; `;
const PropsHead = styled.div` height: 24px; margin-top: 3px; display: flex; align-items: center; gap: 10px; flex: none; letter-spacing: .5px; `;
const Button = styled.span`
  ${box} width: ${(p) => p.$w || 24}px; height: ${(p) => p.$h || 24}px; flex: none; display: flex; align-items: center; justify-content: center; gap: 3px;
  background: linear-gradient(#fff, #edebe9);
`;
const EffectRow = styled.div` display: flex; height: 132px; margin-top: 5px; flex: none; `;
const Preview = styled.div` width: 125px; height: 126px; display: flex; align-items: center; justify-content: center; padding: 7px 7px 0 0; `;
const Dot = styled.div`
  width: 41px; height: 41px; border-radius: 50%; background: #ff6464; border: 1px solid #f01818;
  box-shadow: 0 0 14px 5px rgba(23, 163, 204, .52);
`;
const EffectList = styled.div` width: 316px; height: 119px; margin-top: 6px; border: 1px solid #b3afab; background: #fff; padding-top: 1px; `;
const EffectItem = styled.div`
  height: 17px; display: flex; align-items: center; gap: 6px; padding-left: 3px;
  ${(p) => p.$on && "background: #308cc6; color: #e9f2f9;"}
`;
const EffectButtons = styled.div` display: grid; grid-template-columns: 28px 28px; gap: 4px 6px; align-content: start; margin-left: 6px; `;
const Divider = styled.i` height: 2px; margin-top: 6px; background: #a19d99; border-bottom: 1px solid #fff; flex: none; `;
const TypeRow = styled.div` display: flex; align-items: center; margin-top: 9px; height: 25px; padding: 0 1px; flex: none; `;
const TypeLabel = styled.span` width: 76px; white-space: nowrap; letter-spacing: .4px; `;
const Form = styled.div` display: flex; flex-direction: column; padding: 12px 10px 0 10px; flex: none; `;
const FormRow = styled.div` height: 25px; margin-bottom: ${(p) => p.$mb || 0}px; display: flex; align-items: center; `;
const FormLabel = styled.span` width: 111px; flex: none; display: flex; align-items: center; gap: 6px; white-space: nowrap; `;
const Radio = styled.i`
  width: 14px; height: 14px; border: 1px solid #a9a5a1; border-radius: 50%; background: #fff;
  ${(p) => p.$on && "background: radial-gradient(circle, #333 3px, #fff 4px);"}
`;
const Spin = styled.span`
  ${box} width: ${(p) => p.$w}px; height: 24px; flex: none; display: flex; align-items: center; padding-left: 4px;
  background: #fff; white-space: nowrap; overflow: hidden;
`;
const SpinArrows = styled.span`
  width: 14px; height: 22px; margin-left: auto; display: flex; flex-direction: column; justify-content: space-evenly; background: #f3f1ef;
  border-left: 1px solid ${(p) => (p.$light ? "#e4e1de" : "#b3afab")};
`;
const Slider = styled.span` width: 273px; flex: none; display: flex; align-items: center; margin: 0 4px 0 1px; `;
const SliderFill = styled.i` flex: 1; height: 5px; background: #3f9cdc; border: 1px solid #2672a8; border-radius: 2px 0 0 2px; `;
const SliderKnob = styled.i` width: 13px; height: 13px; border: 1px solid #a5a19d; border-radius: 3px; background: linear-gradient(#fff, #eee); `;
const SliderRest = styled.i` width: 130px; height: 5px; background: #d5d2cf; border: 1px solid #b9b5b1; border-radius: 0 2px 2px 0; `;
const ColorButton = styled.span`
  ${box} width: 365px; height: 27px; padding: 5px 4px; background: linear-gradient(#fff, #edebe9);
  ${(p) => p.$off && "border-color: #c9c5c2;"}
  &::before { content: ""; display: block; height: 16px; border-radius: 3px; background: ${(p) => p.$color || "none"}; }
`;
const ColorDrop = styled.span`
  ${box} width: 12px; height: 27px; margin-left: 0; display: flex; align-items: center; background: linear-gradient(#fff, #edebe9);
  ${(p) => p.$off && "border-color: #c9c5c2;"}
`;
const Footer = styled.div` margin-top: auto; height: 28px; display: flex; align-items: center; margin-bottom: 2px; letter-spacing: .05px; `;
const Gap = styled.i` width: ${(p) => p.$w}px; flex: none; `;
const Push = styled.i` margin-left: auto; `;

/* ---------- status bar ---------- */

const Status = styled.footer`
  height: 28px; flex: none; display: flex; align-items: center; font-size: 12px; padding: 3px 0 0 2px; white-space: nowrap; letter-spacing: 0;
`;
const Locator = styled.span`
  ${box} width: 267px; height: 24px; display: flex; align-items: center; gap: 9px; padding-left: 7px; background: #fff;
  color: #838383; font-size: 14.500px; letter-spacing: .05px;
`;
const StatusText = styled.span` width: ${(p) => p.$w}px; flex: none; margin-left: ${(p) => p.$ml || 0}px; letter-spacing: ${(p) => p.$ls || 0}px; `;
const Field = styled.span`
  ${box} width: ${(p) => p.$w}px; height: 23px; flex: none; display: flex; align-items: center; background: #fff; padding-left: ${(p) => p.$pl || 4}px;
  overflow: hidden;
`;
const FieldDrop = styled.span` width: 20px; height: 23px; margin-left: auto; display: flex; align-items: center; border-left: 1px solid #b3afab; background: #f3f1ef; `;

/* ---------- data ---------- */

const MENU = [
  ["Pro", "j", "ect", 61.5], ["", "E", "dit", 42.5], ["", "V", "iew", 48], ["", "L", "ayer", 51], ["", "S", "ettings", 71],
  ["", "P", "lugins", 64], ["Vect", "o", "r", 59], ["", "R", "aster", 57], ["", "D", "atabase", 78], ["", "W", "eb", 46],
  ["", "M", "esh", 52], ["Pro", "c", "essing", 87], ["", "H", "elp", 50],
];
const FILE_TOOLS = ["page", "open", "save", "layout", "tools", "style"];
const NAV_TOOLS = ["hand", "pan", "zoomin", "zoomout", "zoomfull", "zoomsel", "zoomlayer", "zoom11", "zoomprev", "zoomnext", "newbook", "newmark", "book", "clock", "refresh"];
const ATTR_TOOLS = ["identify", "table", "abacus", "gear", "sigma", "ruler", "|", "tip", "action", "-", "textnote", "|"];
const SIDE = [["vadd"], ["raster"], ["mesh"], ["comma"], ["featheradd"], ["virtadd"], ["pgadd", 1], ["wmsadd", 1], ["wcsadd"], ["wfsadd", 1], ["vnew", 1]];
const BROWSER = [
  ["star", "Favorites"], ["book", "Spatial Bookmarks", 1], ["home", "Home", 1], ["folder", "/", 1], ["geopackage", "GeoPackage"],
  ["feather", "SpatiaLite"], ["elephant", "PostGIS"], ["mssql", "MSSQL"], ["db2", "DB2"], ["wms", "WMS/WMTS"], ["vtiles", "Vector Tiles"],
];
const BOOKMARKS = [
  ["Exeter", "-3.643792", "50.6402"], ["IOS", "-6.425979", "49.8395"], ["Madaga…", "30.382294", "-32.1709"],
  ["spain", "-11.727807", "32.7012"], ["SW Engl…", "-6.755755", "49.5475"], ["UK", "-16.256166", "46.7917"],
];
const EFFECTS = [["Inner Glow"], ["Inner Shadow"], ["Source", 1], ["Outer Glow", 1, 1], ["Drop Shadow"]];

const Tools = ({ items, on }) => items.map((n, i) =>
  n === "|" || n === "-"
    ? <DropSlot key={i}><Caret $c={n === "-" ? "#bbb" : "#444"} $s={4.5} /></DropSlot>
    : <ToolButton key={i} $on={on === n}><Icon n={n} s={23} /></ToolButton>);

const Arrows = ({ light }) => <SpinArrows $light={light}><Caret $up $s={3.5} /><Caret $s={3.5} /></SpinArrows>;

const Title = ({ text, right }) => (
  <DockTitle $right={right}><span>{text}</span><FloatIcon /><CloseIcon /></DockTitle>
);

export default function App() {
  return (
    <Window>
      <Global />
      <MenuBar>
        {MENU.map(([a, b, c, w]) => <MenuItem key={a + b + c} $w={w}>{a}<u>{b}</u>{c}</MenuItem>)}
      </MenuBar>
      <ToolBar>
        <Grip $start />
        <Tools items={FILE_TOOLS} />
        <Grip />
        <Tools items={NAV_TOOLS} on="hand" />
        <Grip $ml={4} />
        <Tools items={ATTR_TOOLS} />
      </ToolBar>
      <ToolBar>
        <Grip $start />
        <Tools items={["datasource", "geopackagenew", "vnew", "feathernew", "chip"]} />
        <Separator />
        <Tools items={["virtnew"]} />
        <Separator />
      </ToolBar>
      <ToolBar $h={38}>
        <Grip $start />
        <Tools items={["select", "|", "selexp", "|", "deselect", "|"]} />
      </ToolBar>

      <Body>
        <SideBar>
          <SideGrip />
          {SIDE.map(([n, drop]) => (
            <SideItem key={n}><Icon n={n} s={24} />{drop && <SideCaret><Caret $s={4.5} /></SideCaret>}</SideItem>
          ))}
        </SideBar>

        <Docks>
          <Title text="Browser" />
          <DockTools>
            {["addsel", "refresh", "filter", "treeup", "info"].map((n) => <DockButton key={n}><Icon n={n} s={15} /></DockButton>)}
          </DockTools>
          <View $h={200} $row>
            <TreeList>
              {BROWSER.map(([n, t, open]) => (
                <TreeRow key={n}>
                  <TreeArrow>{open && <CaretSide />}</TreeArrow>
                  <Icon n={n} s={16} />
                  <TreeText>{t}</TreeText>
                </TreeRow>
              ))}
            </TreeList>
            <Scroll>
              <ScrollButton><Caret $up /></ScrollButton>
              <ScrollThumb />
              <ScrollButton $end><Caret /></ScrollButton>
            </Scroll>
          </View>
          <HSplit />
          <Title text="Layers" />
          <DockTools>
            <DockButton $on><Icon n="brush" s={16} /></DockButton>
            {["addgroup", "eye", "filter"].map((n) => <DockButton key={n}><Icon n={n} s={16} /></DockButton>)}
            <DockButton $w={26}><Icon n="eps" s={16} /></DockButton>
            <DockButton $w={8}><Caret $s={4.5} /></DockButton>
            <DockButton $w={28}><Icon n="treedown" s={15} /></DockButton>
            <DockButton $w={24}><Icon n="treeup" s={15} /></DockButton>
            <DockButton><Icon n="remsel" s={15} /></DockButton>
          </DockTools>
          <View $h={243}>
            <LayerRow><Check on /><Swatch /><b>uk</b></LayerRow>
          </View>
          <HSplit />
          <Title text="Spatial Bookmark Manager" />
          <DockTools>
            {["marklens", "newmark", "trash", "share"].map((n) => <DockButton key={n}><Icon n={n} s={16} /></DockButton>)}
          </DockTools>
          <View $h={229}>
            <TableHead>
              <HeadCell>Name<Caret /></HeadCell><HeadCell>Group</HeadCell><HeadCell>xMin</HeadCell><HeadCell>yMin</HeadCell>
            </TableHead>
            {BOOKMARKS.map(([n, x, y], i) => (
              <TableRow key={n} $odd={i % 2}>
                <Cell><Icon n="mark" s={16} />{n}</Cell><Cell>{x}</Cell><Cell>{y}</Cell>
              </TableRow>
            ))}
            <HScroll>
              <HScrollButton><CaretSide $left /></HScrollButton>
              <HScrollThumb />
              <HScrollButton $end><CaretSide /></HScrollButton>
            </HScroll>
          </View>
        </Docks>
        <VSplit $w={5} />
        <Canvas><MapDrawing /></Canvas>
        <VSplit $w={9} />

        <Panel>
          <Title text="Layer Styling" right />
          <Combo $mt={2}><Icon n="poly" s={17} /><Gap $w={3} />uk<Caret /></Combo>
          <PanelBody>
            <Strip>
              <StripTop><Icon n="brush" s={22} /></StripTop>
              <StripDark>
                {["tag", "halo", "cube", "diagram", "history"].map((n) => <StripItem key={n}><Icon n={n} s={21} /></StripItem>)}
              </StripDark>
            </Strip>
            <Props>
              <PropsHead><Button><Icon n="left" s={15} /></Button>Effects Properties</PropsHead>
              <EffectRow>
                <Preview><Dot /></Preview>
                <EffectList>
                  {EFFECTS.map(([t, on, sel]) => <EffectItem key={t} $on={sel}><Check on={on} />{t}</EffectItem>)}
                </EffectList>
                <EffectButtons>
                  {["add", "up", "remove", "down"].map((n) => <Button key={n} $w={28}><Icon n={n} s={14} /></Button>)}
                </EffectButtons>
              </EffectRow>
              <Divider />
              <TypeRow><TypeLabel>Effect type</TypeLabel><Combo $grow>Outer Glow<Caret /></Combo></TypeRow>
              <Form>
                <FormRow $mb={7}><FormLabel>Spread</FormLabel><Spin $w={266}>3.2000<Arrows /></Spin><Gap $w={6} /><Combo $w={106}>Millimeters<Caret /></Combo></FormRow>
                <FormRow $mb={7}><FormLabel>Blur radius</FormLabel><Spin $w={266}>4.6000<Arrows /></Spin><Gap $w={6} /><Combo $w={106}>Millimeters<Caret /></Combo></FormRow>
                <FormRow $mb={7}>
                  <FormLabel>Opacity</FormLabel>
                  <Slider><SliderFill /><SliderKnob /><SliderRest /></Slider>
                  <Spin $w={100}>
                    50.0 %<Push />
                    <Svg $s={13} viewBox="0 0 13 13"><path d="M4 1.500h9v10H4L0 6.500z" fill="#999" /><path d="M5.500 4l5 5M10.500 4l-5 5" stroke="#fff" /></Svg>
                    <Gap $w={10} /><SpinBox />
                  </Spin>
                </FormRow>
                <FormRow $mb={9}><FormLabel><Radio $on />Single color</FormLabel><ColorButton $color="#17a3cc" /><ColorDrop><Caret /></ColorDrop></FormRow>
                <FormRow $mb={8}><FormLabel><Radio />Color ramp</FormLabel><ColorButton $off /><ColorDrop $off><Caret $c="#c4c0bc" /></ColorDrop></FormRow>
                <FormRow $mb={6}><FormLabel>Blend mode</FormLabel><Combo $grow>Normal<Caret /></Combo></FormRow>
                <FormRow><FormLabel>Draw mode</FormLabel><Combo $grow>Render and modify<Caret /></Combo></FormRow>
              </Form>
              <Footer>
                <Button><Icon n="undo" s={15} /></Button><Gap $w={6} /><Button><Icon n="redo" s={15} /></Button>
                <Push /><Check on /><Gap $w={5} />Live update<Gap $w={13} />
                <Button $w={80} $h={26}><Icon n="check" s={16} />Apply</Button><Gap $w={1} />
              </Footer>
            </Props>
          </PanelBody>
        </Panel>
      </Body>

      <Status>
        <Locator><Icon n="search" s={14} />Type to locate (Ctrl+K)</Locator>
        <StatusText $w={753} $ml={9} $ls={-0.2}>1 legend entries removed.</StatusText>
        <StatusText $w={64}>Coordinate</StatusText>
        <Field $w={102} $pl={8}>89870,5913956</Field>
        <Gap $w={5} /><Icon n="extents" s={16} />
        <StatusText $w={32} $ml={12}>Scale</StatusText>
        <Field $w={96} $pl={3}>1:5868572<FieldDrop><Caret /></FieldDrop></Field>
        <Gap $w={12} /><Icon n="lock" s={14} />
        <StatusText $w={57} $ml={8} $ls={-0.1}>Magnifier</StatusText>
        <Field $w={96}>100%<Arrows light /></Field>
        <StatusText $w={57} $ml={10} $ls={-0.1}>Rotation</StatusText>
        <Field $w={93}>0.0 °<Arrows light /></Field>
        <Gap $w={7} /><Check on />
        <StatusText $w={58} $ml={5}>Render</StatusText>
        <Icon n="crs" s={14} />
        <StatusText $w={85} $ml={5} $ls={-0.1}>EPSG:32630</StatusText>
        <Icon n="bubble" s={16} />
      </Status>
    </Window>
  );
}

function SpinBox() {
  return <Arrows />;
}
